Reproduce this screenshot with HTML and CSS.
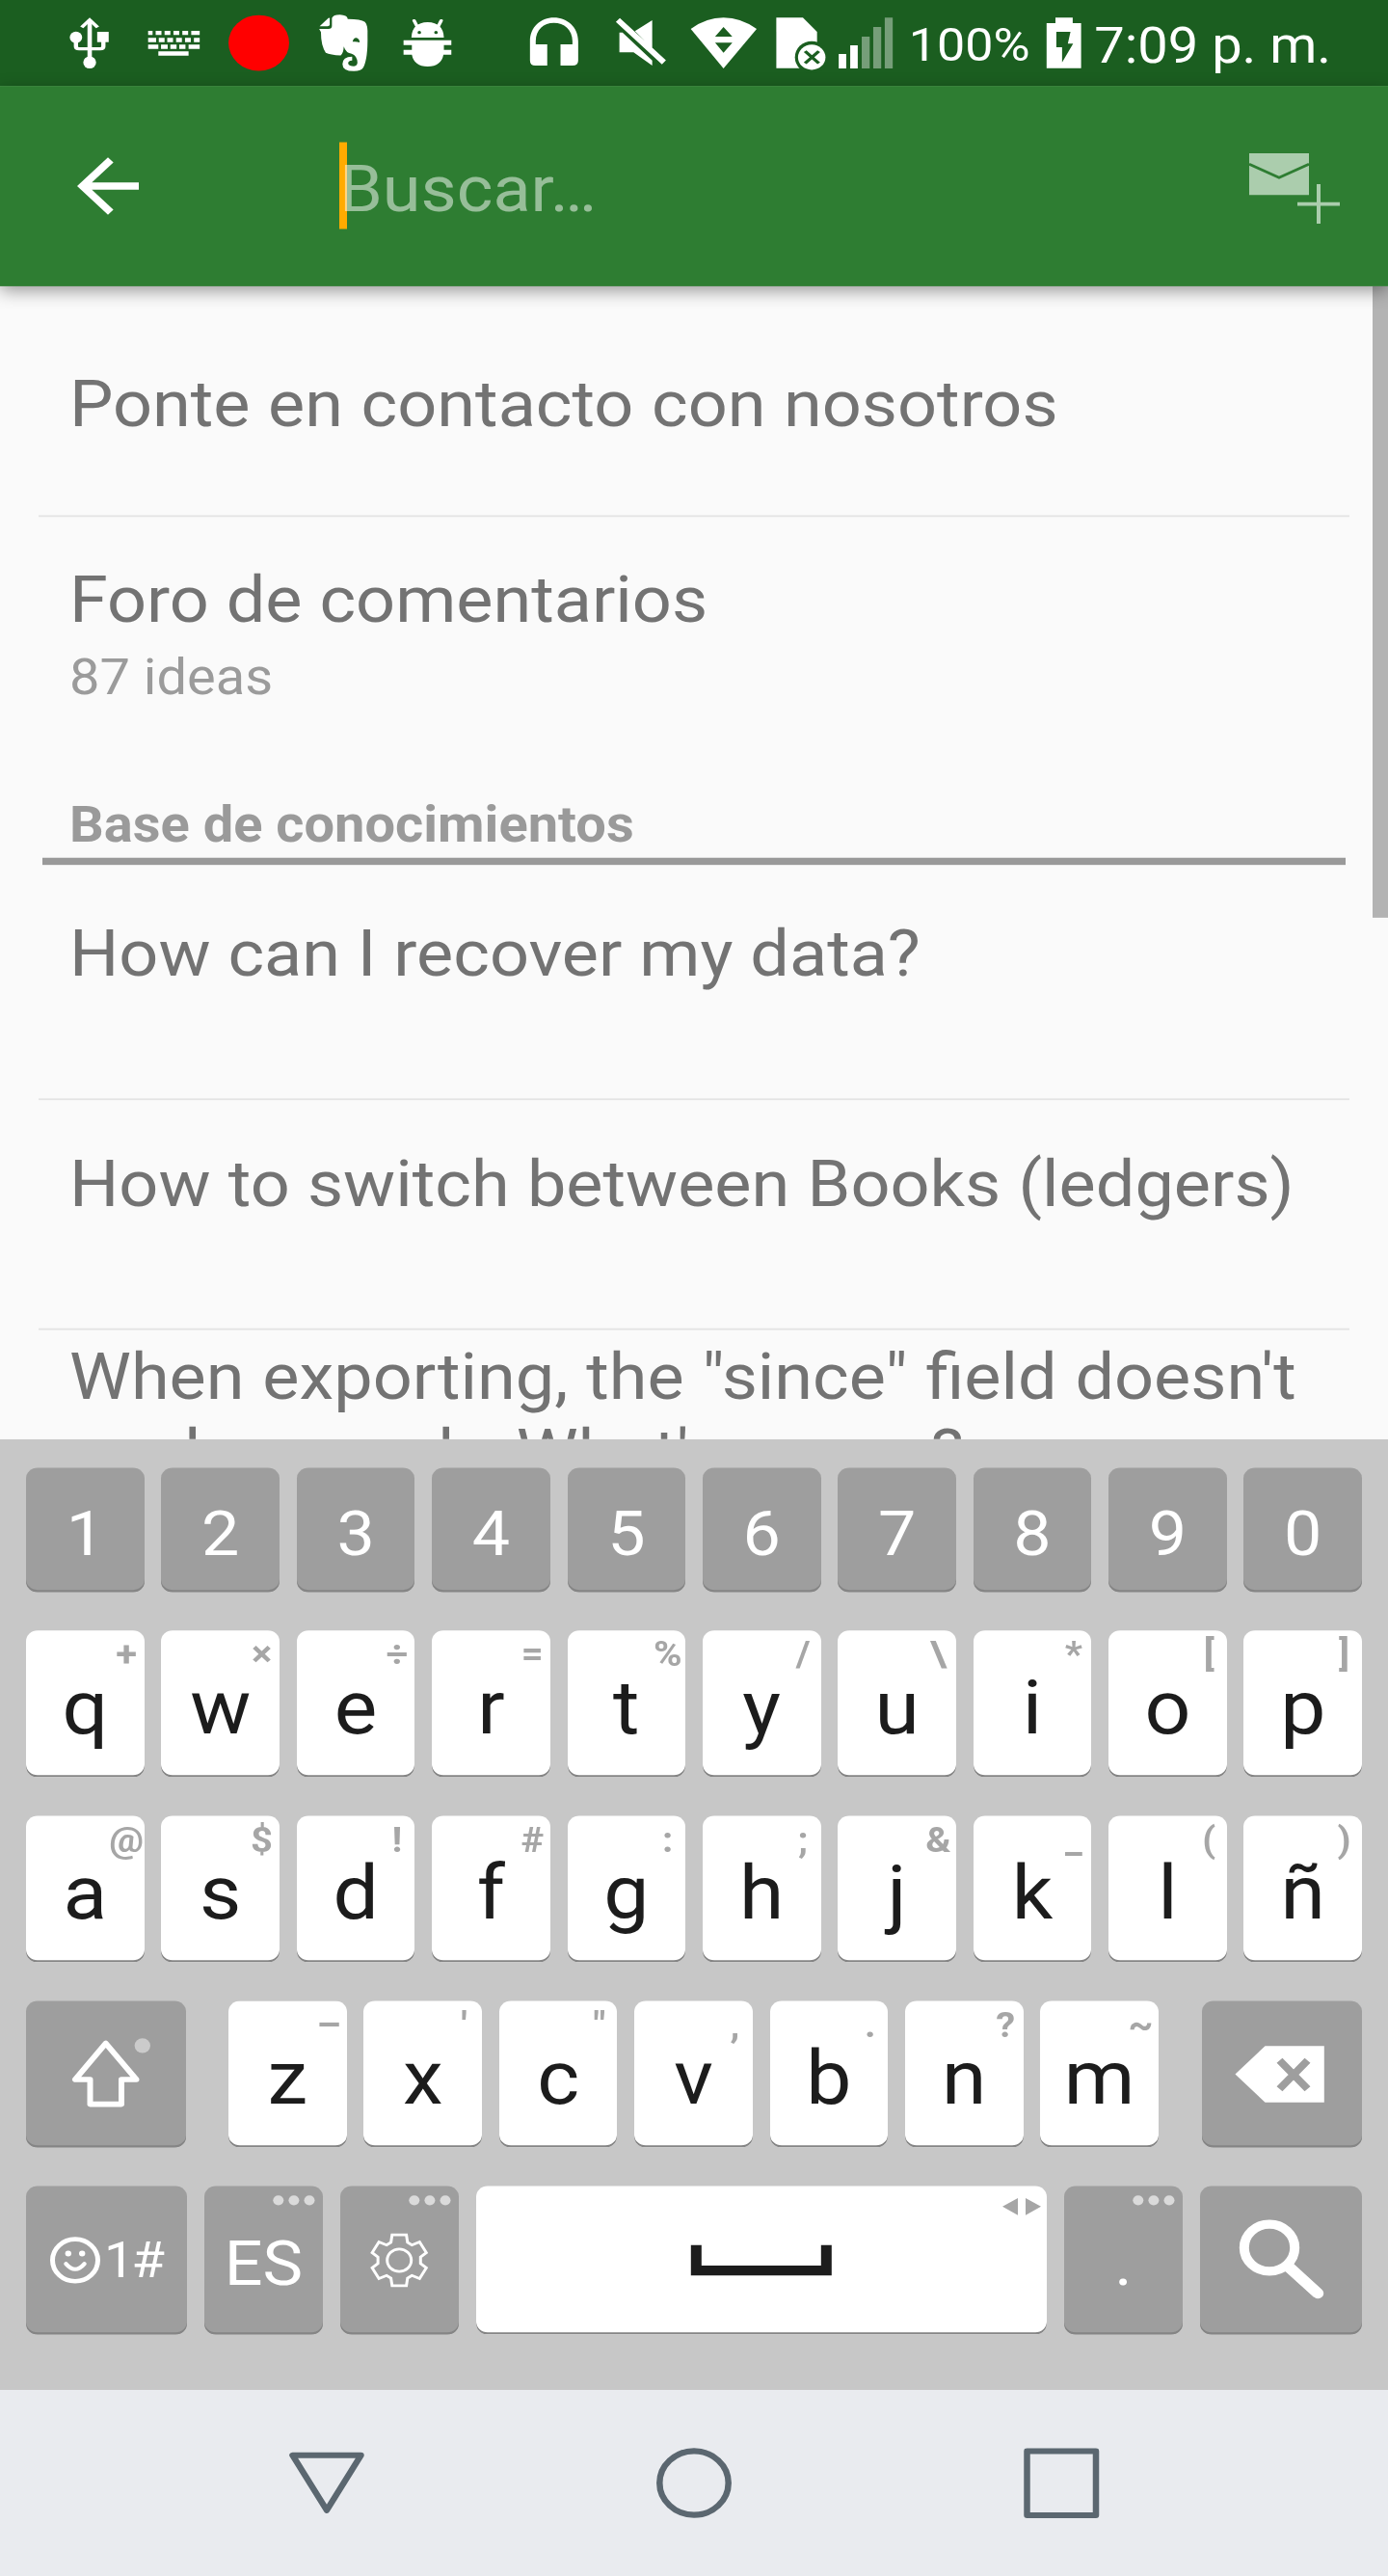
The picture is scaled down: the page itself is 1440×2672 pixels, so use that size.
FILE: index.html
```html
<!DOCTYPE html>
<html lang="es">
<head>
<meta charset="utf-8">
<title>Buscar</title>
<link rel="stylesheet" href="styles.css">
</head>
<body>
<div class="viewport">
<div class="screen">

<header class="status">
  <svg width="78" height="96" viewBox="130 0 170 267" preserveAspectRatio="none" fill="#fff"><path d="M197 62h10v120h-10z"/><path d="M184 85L202 62l18 23" fill="none" stroke="#fff" stroke-width="9"/><ellipse cx="171" cy="116" rx="14" ry="18"/><path d="M219 99h26v32h-26z"/><path d="M171 125v20q0 7 7 7h48q7 0 7-7v-20" fill="none" stroke="#fff" stroke-width="9.5"/><ellipse cx="202" cy="194" rx="14.500" ry="19"/></svg>
  <svg width="83" height="96" viewBox="300 0 180 267" preserveAspectRatio="none" fill="#fff"><path d="M334 96h10v13h-10zM351 96h13v13h-13zM371 96h13v13h-13zM391 96h13v13h-13zM411 96h13v13h-13zM431 96h19v13h-19zM334 118h18v13h-18zM358 118h13v13h-13zM377 118h13v13h-13zM397 118h13v13h-13zM417 118h13v13h-13zM437 118h13v13h-13zM334 139h23v13h-23zM363 139h15v13h-15zM384 139h14v13h-14zM404 139h14v13h-14zM425 139h25v13h-25zM357 160h68v13h-68z"/></svg>
  <svg width="101" height="96" viewBox="480 0 220 267" preserveAspectRatio="none"><ellipse cx="583.500" cy="133.500" rx="68.500" ry="86.500" fill="#f00"/></svg>
  <svg width="73" height="96" viewBox="700 0 160 267" preserveAspectRatio="none" fill="#fff"><path d="M721 82L741 56q3-2 3 2v18q0 6-5 6z"/><path d="M720 90h21q8 0 8-9V56q3-10 18-10 17 1 18 13 30 0 39 9 7 8 6 42 1 70-9 98-5 13-22 13-26 0-26-22 0-22 22-23v12q-10 1-9 10 2 8 13 8 8-2 8-12-1-21-13-27-13-1-18-22-1 22-7 27-24-1-34-8-11-22-11-64z"/><path d="M796 130q2-13 9-12 7 3 7 14-8-4-16-2z" fill="#1b5e20"/></svg>
  <svg width="91" height="96" viewBox="860 0 200 267" preserveAspectRatio="none" fill="#fff"><path d="M930 117q1-47 37-48 36 1 37 48zM912 125h109v15h-17v15h17v15h-18q-5 36-36 37-31-1-36-37h-19v-15h19v-15h-19z"/><path d="M936 64l8 21M998 64l-8 21" stroke="#fff" stroke-width="8" stroke-linecap="round"/><ellipse cx="948" cy="101" rx="4" ry="5" fill="#1b5e20"/><ellipse cx="986" cy="101" rx="4" ry="5" fill="#1b5e20"/></svg>
  <svg class="gap-icon" width="78" height="96" viewBox="1170 0 170 267" preserveAspectRatio="none" fill="#fff"><path d="M1198 128c0-43 24-73 54-73s55 30 55 73v60q0 16-13 16h-27v-66h27v-10c0-36-19-57-42-57s-41 21-41 57v10h26v66h-27q-12 0-12-16z"/></svg>
  <svg width="92" height="96" viewBox="1340 0 200 267" preserveAspectRatio="none" fill="#fff"><path d="M1392 68l9-12 104 131-9 13zM1474 63v87l-39-53zM1400 101h7l67 87v16l-42-41h-32z"/></svg>
  <svg width="86.300" height="96" viewBox="-28 0 188 267" preserveAspectRatio="none"><path d="M-7 90Q28 55 67 55t75 35L67 213z" fill="#fff"/><path d="M67 84l20 30H48zM48 133h39l-20 31z" fill="#1b5e20"/></svg>
  <svg width="73.500" height="96" viewBox="160 0 160 267" preserveAspectRatio="none"><path d="M187 55h60l32 44v113h-92z" fill="#fff"/><ellipse cx="267" cy="178" rx="38" ry="50" fill="#1b5e20"/><ellipse cx="267" cy="178" rx="31" ry="39" fill="#fff"/><path d="M252 159l31 38M283 159l-31 38" stroke="#1b5e20" stroke-width="8"/></svg>
  <svg width="64.300" height="96" viewBox="320 0 140 267" preserveAspectRatio="none" fill="#fff"><path d="M329 168h17v45h-17zM355 141h17v72h-17z"/><path d="M381 114h18v99h-18zM407 84h18v129h-18zM433 55h18v158h-18z" opacity=".4"/></svg>
  <span class="percent">100%</span>
  <svg width="50.500" height="96" viewBox="780 0 110 267" preserveAspectRatio="none"><path d="M797 72h20V55h39v17h19v140h-78z" fill="#fff"/><path d="M819 99h32l-6 37h12l-25 58v-47h-13z" fill="#1b5e20"/></svg>
  <span class="time">7:09 p. m.</span>
</header>

<div class="toolbar">
  <svg width="96" height="96" viewBox="0 0 24 24" fill="#fff"><path d="M20 11H7.830l5.590-5.590L12 4l-8 8 8 8 1.410-1.410L7.830 13H20z"/></svg>
  <div class="search"><i class="caret"></i><span class="hint-text">Buscar…</span></div>
  <svg class="new-message" width="96" height="80" viewBox="0 0 96 80" fill="#abcdad"><path d="M1 .5h62V47H1z"/><path d="M1 12.500l31 15 31-15" fill="none" stroke="#2e7d32" stroke-width="3"/><path d="M71 35h4v44h-4zM51 55h44v4h-44z"/></svg>
</div>

<main class="content">
  <ul class="list">
    <li class="item contact">Ponte en contacto con nosotros</li>
    <li class="item forum">Foro de comentarios<small>87 ideas</small></li>
    <li class="section">Base de conocimientos</li>
    <li class="item recover">How can I recover my data?</li>
    <li class="item books">How to switch between Books (ledgers)</li>
    <li class="item export">When exporting, the "since" field doesn't<br><span class="line2">work properly. <span class="tail">What's wrong?</span></span></li>
  </ul>
  <div class="scrollbar"></div>
</main>

<section class="keyboard">
  <div class="row digits">
    <b class="key dark">1</b><b class="key dark">2</b><b class="key dark">3</b><b class="key dark">4</b><b class="key dark">5</b><b class="key dark">6</b><b class="key dark">7</b><b class="key dark">8</b><b class="key dark">9</b><b class="key dark">0</b>
  </div>
  <div class="row">
    <b class="key">q<i>+</i></b><b class="key">w<i>×</i></b><b class="key">e<i>÷</i></b><b class="key">r<i>=</i></b><b class="key">t<i>%</i></b><b class="key">y<i>/</i></b><b class="key">u<i>\</i></b><b class="key">i<i>*</i></b><b class="key">o<i>[</i></b><b class="key">p<i>]</i></b>
  </div>
  <div class="row">
    <b class="key">a<i>@</i></b><b class="key">s<i>$</i></b><b class="key">d<i>!</i></b><b class="key">f<i>#</i></b><b class="key">g<i>:</i></b><b class="key">h<i>;</i></b><b class="key">j<i>&amp;</i></b><b class="key">k<i>_</i></b><b class="key">l<i>(</i></b><b class="key">ñ<i>)</i></b>
  </div>
  <div class="row letters">
    <b class="key dark wide"><svg width="166" height="164" viewBox="0 0 166 164"><path d="M82.700 47.500L51 88h15.500v27.500h32.500V88h15.500z" fill="none" stroke="#fff" stroke-width="6" stroke-linejoin="round"/><circle cx="120.800" cy="50" r="8.200" fill="#cbcbcb"/></svg></b>
    <div class="group">
      <b class="key">z<i>–</i></b><b class="key">x<i>'</i></b><b class="key">c<i>"</i></b><b class="key">v<i>,</i></b><b class="key">b<i>.</i></b><b class="key">n<i>?</i></b><b class="key">m<i>~</i></b>
    </div>
    <b class="key dark wide"><svg width="166" height="164" viewBox="0 0 166 164"><path d="M34.500 82l31-31.500h61.300v63H65.500z" fill="#fff"/><path d="M80.500 66.500l29 32M109.500 66.500l-29 32" stroke="#9e9e9e" stroke-width="8"/></svg></b>
  </div>
  <div class="row bottom">
    <b class="key dark emoji">
      <svg width="58" height="164" viewBox="0 0 58 164" fill="none" stroke="#fff"><circle cx="28" cy="83" r="23.500" stroke-width="5"/><path d="M18.500 87q9.500 12 19 0" stroke-width="4.500" stroke-linecap="round"/><circle cx="20.800" cy="75.500" r="3.200" fill="#fff" stroke="none"/><circle cx="35.200" cy="75.500" r="3.200" fill="#fff" stroke="none"/></svg><span>1#</span></b>
    <b class="key dark"><span class="lang">ES</span><svg class="dots" width="54" height="32" viewBox="0 0 54 32" fill="#dadada"><circle cx="7.800" cy="16" r="5.500"/><circle cx="23.900" cy="16" r="5.500"/><circle cx="40" cy="16" r="5.500"/></svg></b>
    <b class="key dark"><svg width="123" height="164" viewBox="0 0 123 164" fill="none" stroke="#fff" stroke-width="3"><circle cx="61.200" cy="83" r="12.500"/><path d="M53.800 54.500h14.800l1.200 8.500 4.500 3 8-3.500 7 12-6 5v7l6 5-7 12-8-3.500-4.500 3-1.200 8.500H53.800l-1.200-8.500-4.500-3-8 3.500-7-12 6-5v-7l-6-5 7-12 8 3.500 4.500-3z"/></svg><svg class="dots" width="54" height="32" viewBox="0 0 54 32" fill="#dadada"><circle cx="7.800" cy="16" r="5.500"/><circle cx="23.900" cy="16" r="5.500"/><circle cx="40" cy="16" r="5.500"/></svg></b>
    <b class="key space"><svg width="592" height="164" viewBox="0 0 592 164"><path d="M222.800 66h11v23h124V66h11v34h-146z" fill="#1c1c1c"/><path d="M562 13.500v19L546 23zM570 13.500v19l16-9.500z" fill="#a6a6a6"/></svg></b>
    <b class="key dark"><span class="lang">.</span><svg class="dots" width="54" height="32" viewBox="0 0 54 32" fill="#dadada"><circle cx="7.800" cy="16" r="5.500"/><circle cx="23.900" cy="16" r="5.500"/><circle cx="40" cy="16" r="5.500"/></svg></b>
    <b class="key dark go"><svg width="168" height="164" viewBox="0 0 168 164" fill="none" stroke="#fff"><circle cx="72" cy="69" r="26.200" stroke-width="10"/><path d="M91 90l31 30" stroke-width="11.500"/><path d="M93 91l29.500 29" stroke-width="11.500" stroke-linecap="round"/></svg></b>
  </div>
</section>

<nav class="nav">
  <svg width="80" height="80" viewBox="0 0 80 80"><path d="M4.500 9h71L40 70.500z"/></svg>
  <svg width="80" height="80" viewBox="0 0 80 80"><circle cx="40" cy="40" r="35.700"/></svg>
  <svg width="80" height="80" viewBox="0 0 80 80"><path d="M4.500 4.500h71.500v71.500H4.500z"/></svg>
</nav>

</div>
</div>
</body>
</html>
```
FILE: styles.css
```css
* { box-sizing: border-box; }
body { margin: 0; background: #fafafa; }
svg { display: block; flex: none; }

.viewport { width: 1440px; height: 2672px; overflow: hidden; }

/* The phone canvas is 1440x2880, flattened to the viewport's height. */
.screen {
  width: 1440px;
  height: 2880px;
  display: flex;
  flex-direction: column;
  transform: scaleY(0.927778);
  transform-origin: 0 0;
  font-family: Roboto, "Liberation Sans", sans-serif;
}

.status {
  height: 96px;
  flex: none;
  display: flex;
  padding-left: 59.7px;
  background: #1b5e20;
  color: #fff;
  white-space: nowrap;
}
.gap-icon { margin-left: 51px; }
.percent { width: 147px; padding-left: 12px; font-size: 52px; line-height: 101px; }
.time { padding-left: 7px; font-size: 56px; line-height: 102px; }

.toolbar {
  position: relative;
  z-index: 1;
  height: 224px;
  flex: none;
  display: flex;
  align-items: center;
  padding: 0 49px 0 64px;
  background: #2e7d32;
  box-shadow: 0 6px 18px rgba(0, 0, 0, .42);
}
.search { display: flex; flex: 1; align-items: center; margin-left: 192px; }
.caret { width: 8px; height: 97px; margin: -2px -8px 0 0; background: #ffab00; }
.hint-text { position: relative; font-size: 72px; line-height: 84px; margin-top: 7px; color: rgba(255, 255, 255, .5); }
.new-message { margin-top: 6px; }

.content {
  position: relative;
  height: 1289px;
  flex: none;
  overflow: hidden;
  background: #fafafa;
}
.list { margin: 0; padding: 0 40px; list-style: none; }
.item {
  padding-left: 32px;
  border-bottom: 2px solid #e4e4e4;
  font-size: 72px;
  line-height: 84px;
  color: #737373;
  white-space: nowrap;
}
.item small { display: block; margin-top: 11px; font-size: 56px; line-height: 66px; color: #9b9b9b; }
.contact { height: 258px; padding-top: 90px; word-spacing: .7px; }
.forum { height: 311px; padding-top: 50.500px; border: 0; }
.section {
  height: 78px;
  margin: 0 4px;
  padding-left: 28px;
  border-bottom: 8px solid #999;
  font-size: 56px;
  font-weight: 700;
  line-height: 66px;
  color: #9a9a9a;
}
.recover { height: 263px; padding-top: 58px; }
.books { height: 257px; padding-top: 52px; word-spacing: .4px; }
.export { height: 260px; padding-top: 10px; line-height: 85px; word-spacing: 1px; }
.line2 { word-spacing: 0; }
.tail { margin-left: -3px; }
.scrollbar { position: absolute; top: 0; right: 0; width: 16px; height: 706px; background: #b3b3b3; }

.keyboard {
  height: 1063px;
  flex: none;
  display: flex;
  flex-direction: column;
  gap: 43px;
  padding: 32px 27px 0;
  background: #c7c7c7;
}
.row { display: flex; height: 164px; gap: 17.7px; }
.digits { height: 139px; }
.key {
  position: relative;
  flex: 1 1 0;
  display: flex;
  justify-content: center;
  border-radius: 12px;
  background: #fff;
  box-shadow: inset 0 -2.5px #858585;
  color: #1c1c1c;
  font-size: 84px;
  font-weight: 400;
  line-height: 173px;
}
.key i {
  position: absolute;
  top: 0;
  right: 0;
  width: 37px;
  display: flex;
  justify-content: center;
  font-size: 40px;
  font-style: normal;
  font-weight: 700;
  line-height: 54px;
  color: #a6a6a6;
}
.dark { background: #9e9e9e; color: #fff; }
.digits .key { font-size: 70px; line-height: 148px; }
.letters { gap: 44px; }
.group { display: flex; flex: 1; gap: 17.7px; padding-right: 1px; }
.wide { flex: 0 0 166px; }
.bottom { gap: 18px; height: 166px; }
.bottom .key { flex: 0 0 123px; }
.bottom .emoji {
  flex-basis: 167px;
  justify-content: flex-start;
  padding-left: 23px;
  font-size: 56px;
  line-height: 166px;
  letter-spacing: -3px;
}
.bottom .space { flex-basis: 592px; }
.bottom .go { flex-basis: 168px; }
.lang { font-size: 70px; line-height: 173px; }
.dots { position: absolute; top: 0; right: 0; }

.nav {
  height: 208px;
  flex: none;
  display: flex;
  align-items: center;
  gap: 301px;
  padding-left: 299px;
  background: #e9ebef;
}
.nav svg { fill: none; stroke: #5b6770; stroke-width: 6.5px; stroke-linejoin: round; }
```
